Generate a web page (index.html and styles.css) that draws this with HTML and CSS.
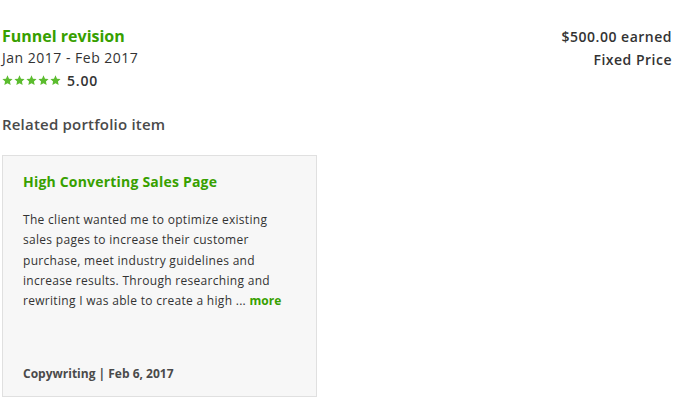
FILE: index.html
```html
<!DOCTYPE html>
<html>
<head>
<meta charset="utf-8">
<link rel="stylesheet" href="styles.css">
</head>
<body>
<div class="page">
  <div class="job">
    <div class="job-main">
      <div class="job-title">Funnel revision</div>
      <div class="job-dates">Jan 2017 - Feb 2017</div>
      <div class="job-rating">
        <span class="stars">
          <svg viewBox="0 0 12 12" class="star"><path d="M6 0.4l1.65 3.6 3.9 0.45-2.9 2.65 0.8 3.85L6 9l-3.45 1.95 0.8-3.85L0.45 4.45l3.9-0.45z"/></svg>
          <svg viewBox="0 0 12 12" class="star"><path d="M6 0.4l1.65 3.6 3.9 0.45-2.9 2.65 0.8 3.85L6 9l-3.45 1.95 0.8-3.85L0.45 4.45l3.9-0.45z"/></svg>
          <svg viewBox="0 0 12 12" class="star"><path d="M6 0.4l1.65 3.6 3.9 0.45-2.9 2.65 0.8 3.85L6 9l-3.45 1.95 0.8-3.85L0.45 4.45l3.9-0.45z"/></svg>
          <svg viewBox="0 0 12 12" class="star"><path d="M6 0.4l1.65 3.6 3.9 0.45-2.9 2.65 0.8 3.85L6 9l-3.45 1.95 0.8-3.85L0.45 4.45l3.9-0.45z"/></svg>
          <svg viewBox="0 0 12 12" class="star"><path d="M6 0.4l1.65 3.6 3.9 0.45-2.9 2.65 0.8 3.85L6 9l-3.45 1.95 0.8-3.85L0.45 4.45l3.9-0.45z"/></svg>
        </span>
        <span class="score">5.00</span>
      </div>
    </div>
    <div class="job-side">
      <div class="earned">$500.00 earned</div>
      <div class="type">Fixed Price</div>
    </div>
  </div>
  <h3 class="related">Related portfolio item</h3>
  <div class="card">
    <div class="card-title">High Converting Sales Page</div>
    <p class="card-text">The client wanted me to optimize existing sales pages to increase their customer purchase, meet industry guidelines and increase results. Through researching and rewriting I was able to create a high ...&nbsp;<span class="more">more</span></p>
    <div class="card-foot">Copywriting | Feb 6, 2017</div>
  </div>
</div>
</body>
</html>
```
FILE: styles.css
```css
html, body {
  margin: 0;
  padding: 0;
  background: #fff;
}
body {
  font-family: "Open Sans", "DejaVu Sans", sans-serif;
  color: #333;
}
.page {
  padding: 26px 12px 0 2px;
}
.job {
  display: flex;
  justify-content: space-between;
  align-items: flex-start;
}
.job-title {
  font-size: 16px;
  font-weight: 700;
  color: #37a000;
  line-height: 20px;
}
.job-dates {
  font-size: 14px;
  letter-spacing: 0.5px;
  line-height: 20px;
  margin-top: 2px;
  color: #333;
}
.job-rating {
  display: flex;
  align-items: center;
  margin-top: 4px;
  height: 16px;
}
.stars {
  display: flex;
  gap: 1px;
}
.star {
  width: 11px;
  height: 11px;
  fill: #5bbc2e;
}
.score {
  margin-left: 6px;
  font-size: 14px;
  letter-spacing: 0.8px;
  font-weight: 600;
  color: #333;
}
.job-side {
  text-align: right;
  font-size: 14px;
  letter-spacing: 0.5px;
  font-weight: 600;
  line-height: 23px;
  margin-top: -1px;
  color: #333;
}
.related {
  margin: 26px 0 0 0;
  font-size: 15px;
  letter-spacing: 0.2px;
  font-weight: 600;
  line-height: 20px;
  color: #4a4a4a;
}
.card {
  margin-top: 21px;
  width: 315px;
  height: 242px;
  box-sizing: border-box;
  background: #f7f7f7;
  border: 1px solid #e0e0e0;
  padding: 17px 20px 0 20px;
  display: flex;
  flex-direction: column;
}
.card-title {
  font-size: 14px;
  letter-spacing: 0.2px;
  font-weight: 700;
  color: #37a000;
  line-height: 18px;
}
.card-text {
  margin: 19px 0 0 0;
  font-size: 12px;
  letter-spacing: 0.3px;
  line-height: 20.25px;
  color: #333;
}
.more {
  color: #37a000;
  font-weight: 700;
  letter-spacing: 0;
}
.card-foot {
  margin-top: auto;
  margin-bottom: 14px;
  font-size: 12px;
  font-weight: 700;
  color: #4a4a4a;
}
```
